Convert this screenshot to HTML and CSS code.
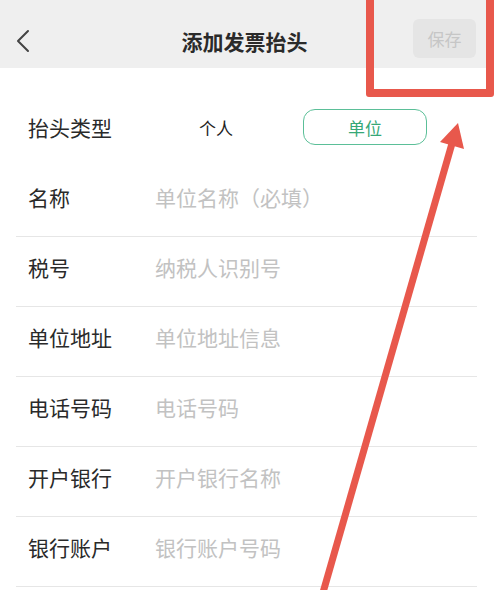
FILE: index.html
```html
<!DOCTYPE html>
<html lang="zh-CN">
<head>
<meta charset="utf-8">
<title>添加发票抬头</title>
<link rel="stylesheet" href="styles.css">
</head>
<body>
<div class="page">
  <header class="nav">
    <div class="back">
      <svg width="14" height="24" viewBox="0 0 14 24"><polyline points="12,2 2,12 12,22" fill="none" stroke="#444" stroke-width="2" stroke-linecap="round" stroke-linejoin="round"/></svg>
    </div>
    <h1 class="title">添加发票抬头</h1>
    <button class="save">保存</button>
  </header>

  <main class="form">
    <div class="row type-row">
      <span class="label">抬头类型</span>
      <div class="options">
        <span class="opt">个人</span>
        <span class="opt active">单位</span>
      </div>
    </div>
    <div class="row field"><span class="label">名称</span><span class="ph">单位名称（必填）</span></div>
    <div class="row field"><span class="label">税号</span><span class="ph">纳税人识别号</span></div>
    <div class="row field"><span class="label">单位地址</span><span class="ph">单位地址信息</span></div>
    <div class="row field"><span class="label">电话号码</span><span class="ph">电话号码</span></div>
    <div class="row field"><span class="label">开户银行</span><span class="ph">开户银行名称</span></div>
    <div class="row field"><span class="label">银行账户</span><span class="ph">银行账户号码</span></div>
  </main>

  <div class="mark-box"></div>
  <svg class="mark-arrow" width="494" height="590" viewBox="0 0 494 590">
    <line x1="322" y1="596" x2="453" y2="140" stroke="#e8584c" stroke-width="7"/>
    <polygon points="458,123 440,142 464,149" fill="#e8584c"/>
  </svg>
</div>
</body>
</html>
```

FILE: styles.css
```css
* { box-sizing: border-box; }
html, body {
  margin: 0;
  padding: 0;
  background: #fff;
  font-family: "Noto Sans CJK SC", "Noto Sans", sans-serif;
  color: #222;
}
.page {
  position: relative;
  width: 494px;
  height: 590px;
  overflow: hidden;
}
.nav {
  height: 68px;
  background: #efefef;
  padding: 13px 18px 0 16px;
  display: flex;
  align-items: center;
}
.back {
  width: 40px;
  display: flex;
  align-items: center;
}
.back svg { display: block; }
.title {
  flex: 1;
  margin: 0;
  text-align: center;
  font-size: 21px;
  font-weight: bold;
  color: #2a2a2a;
  padding-left: 20px;
}
.save {
  width: 63px;
  height: 39px;
  border: none;
  border-radius: 6px;
  background: #e5e5e5;
  color: #c6c6c6;
  font-family: inherit;
  font-size: 17px;
  padding: 0;
  margin-top: -5px;
}
.form {
  padding: 29px 17px 0 16px;
}
.row {
  height: 70px;
  display: flex;
  align-items: center;
  padding: 0 0 10px 12px;
}
.field {
  border-bottom: 1px solid #e6e6e6;
}
.label {
  width: 127px;
  flex: none;
  font-size: 21px;
  color: #2a2a2a;
}
.ph {
  font-size: 21px;
  color: #c2c2c2;
}
.options {
  display: flex;
  gap: 25px;
  margin-left: -1px;
}
.opt {
  width: 124px;
  height: 36px;
  border: 1.5px solid transparent;
  border-radius: 12px;
  display: flex;
  align-items: center;
  justify-content: center;
  font-size: 17px;
  color: #222;
}
.opt.active {
  border-color: #5bbf98;
  color: #36a877;
}
.mark-box {
  position: absolute;
  left: 366px;
  top: -8px;
  width: 128px;
  height: 105px;
  border: 8px solid #e8584c;
  border-radius: 3px;
}
.mark-arrow {
  position: absolute;
  left: 0;
  top: 0;
  pointer-events: none;
}
```
